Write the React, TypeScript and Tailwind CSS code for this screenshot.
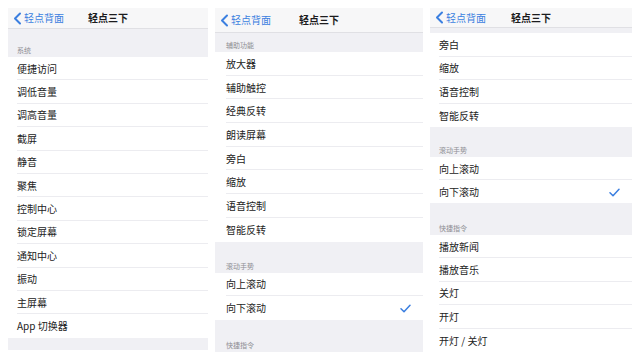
import React from 'react';

type Item = { label: string; checked?: boolean };
type Block =
  | { kind: 'gap'; h: string; title?: string }
  | { kind: 'rows'; rowH: string; items: Item[] };

const font = { fontFamily: '"Noto Sans CJK SC", "Noto Sans", sans-serif' };

function NavBar({ h }: { h: string }) {
  return (
    <div className={`relative flex items-center bg-[#f7f7f8] border-b border-[#e0e0e4] ${h}`}>
      <div className="flex items-center pl-[5px] text-[#3b7fe0]">
        <svg width="9" height="13" viewBox="0 0 9 13" fill="none">
          <polyline points="7,1.5 2,6.5 7,11.5" stroke="#3b7fe0" strokeWidth="2" strokeLinecap="round" strokeLinejoin="round" />
        </svg>
        <span className="ml-[2px] text-[10px] leading-none">轻点背面</span>
      </div>
      <div className="absolute inset-0 flex items-center justify-center pointer-events-none">
        <span className="text-[10px] font-bold text-[#1c1c1e] leading-none">轻点三下</span>
      </div>
    </div>
  );
}

function Panel({ width, navH, pl, blocks }: { width: string; navH: string; pl: string; blocks: Block[] }) {
  return (
    <div className={`flex flex-col ${width}`}>
      <NavBar h={navH} />
      {blocks.map((b, i) =>
        b.kind === 'gap' ? (
          <div key={i} className={`flex items-end bg-[#f0f0f4] ${b.h} ${pl}`}>
            {b.title && <span className="pb-[3px] text-[7px] leading-none text-[#8e8e93]">{b.title}</span>}
          </div>
        ) : (
          <div key={i} className="flex flex-col bg-white">
            {b.items.map((it, j) => (
              <div key={j} className={`flex ${b.rowH} ${pl}`}>
                <div
                  className={`flex flex-1 items-center justify-between pt-[1px] pr-[12px] ${
                    j < b.items.length - 1 ? 'border-b border-[#ececf0]' : ''
                  }`}
                >
                  <span className="text-[10px] leading-none text-[#222]">{it.label}</span>
                  {it.checked && (
                    <svg width="11" height="9" viewBox="0 0 11 9" fill="none">
                      <polyline points="1,4.8 4,7.8 10,1.2" stroke="#3b7fe0" strokeWidth="1.5" strokeLinecap="round" strokeLinejoin="round" />
                    </svg>
                  )}
                </div>
              </div>
            ))}
          </div>
        )
      )}
    </div>
  );
}

const rows = (labels: string[], checkedIdx = -1): Item[] =>
  labels.map((label, i) => ({ label, checked: i === checkedIdx }));

export default function App() {
  return (
    <div className="w-[640px] h-[359px] bg-white overflow-hidden flex items-start pt-[8px] pl-[8px] gap-[7px]" style={font}>
      <Panel
        width="w-[200px]"
        navH="h-[21px]"
        pl="pl-[9px]"
        blocks={[
          { kind: 'gap', h: 'h-[28px]', title: '系统' },
          {
            kind: 'rows',
            rowH: 'h-[23.4px]',
            items: rows(['便捷访问', '调低音量', '调高音量', '截屏', '静音', '聚焦', '控制中心', '锁定屏幕', '通知中心', '振动', '主屏幕', 'App 切换器']),
          },
          { kind: 'gap', h: 'h-[12px]' },
        ]}
      />
      <Panel
        width="w-[208px]"
        navH="h-[25px]"
        pl="pl-[11px]"
        blocks={[
          { kind: 'gap', h: 'h-[19px]', title: '辅助功能' },
          {
            kind: 'rows',
            rowH: 'h-[23.7px]',
            items: rows(['放大器', '辅助触控', '经典反转', '朗读屏幕', '旁白', '缩放', '语音控制', '智能反转']),
          },
          { kind: 'gap', h: 'h-[31px]', title: '滚动手势' },
          { kind: 'rows', rowH: 'h-[23.5px]', items: rows(['向上滚动', '向下滚动'], 1) },
          { kind: 'gap', h: 'h-[32px]', title: '快捷指令' },
        ]}
      />
      <Panel
        width="w-[202px]"
        navH="h-[20px]"
        pl="pl-[9px]"
        blocks={[
          { kind: 'gap', h: 'h-[5px]' },
          { kind: 'rows', rowH: 'h-[23.5px]', items: rows(['旁白', '缩放', '语音控制', '智能反转']) },
          { kind: 'gap', h: 'h-[30px]', title: '滚动手势' },
          { kind: 'rows', rowH: 'h-[23px]', items: rows(['向上滚动', '向下滚动'], 1) },
          { kind: 'gap', h: 'h-[32px]', title: '快捷指令' },
          { kind: 'rows', rowH: 'h-[23.4px]', items: rows(['播放新闻', '播放音乐', '关灯', '开灯', '开灯 / 关灯']) },
        ]}
      />
    </div>
  );
}
